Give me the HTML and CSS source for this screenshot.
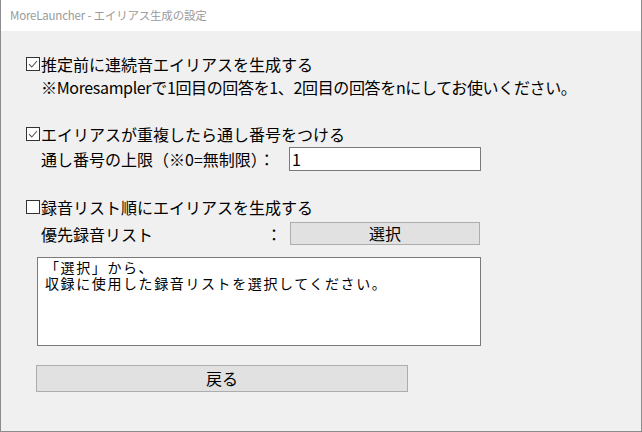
FILE: index.html
```html
<!DOCTYPE html>
<html lang="ja">
<head>
<meta charset="utf-8">
<link rel="stylesheet" href="styles.css">
</head>
<body>
<div class="window">
  <div class="titlebar">MoreLauncher - エイリアス生成の設定</div>
  <div class="content">
    <div class="row check-row r1">
      <span class="cb checked"><svg viewBox="0 0 14 14" width="14" height="14"><rect x="0.5" y="0.5" width="13" height="13" fill="#fff" stroke="#333"/><path d="M3 7.2 L5.8 10 L11 4" fill="none" stroke="#555" stroke-width="1.1"/></svg></span>
      <span>推定前に連続音エイリアスを生成する</span>
    </div>
    <div class="row indent r2">※Moresamplerで1回目の回答を1、2回目の回答をnにしてお使いください。</div>

    <div class="row check-row r3">
      <span class="cb checked"><svg viewBox="0 0 14 14" width="14" height="14"><rect x="0.5" y="0.5" width="13" height="13" fill="#fff" stroke="#333"/><path d="M3 7.2 L5.8 10 L11 4" fill="none" stroke="#555" stroke-width="1.1"/></svg></span>
      <span>エイリアスが重複したら通し番号をつける</span>
    </div>
    <div class="row indent field-row r4">
      <span class="label">通し番号の上限（※0=無制限）：</span>
      <div class="input">1</div>
    </div>

    <div class="row check-row r5">
      <span class="cb"><svg viewBox="0 0 14 14" width="14" height="14"><rect x="0.5" y="0.5" width="13" height="13" fill="#fff" stroke="#333"/></svg></span>
      <span>録音リスト順にエイリアスを生成する</span>
    </div>
    <div class="row indent button-row r6">
      <span class="label split"><span>優先録音リスト</span><span class="colon">：</span></span>
      <div class="btn select-btn">選択</div>
    </div>

    <div class="textbox"><div class="tline">「選択」から、</div><div class="tline">収録に使用した録音リストを選択してください。</div></div>

    <div class="btn back-btn">戻る</div>
  </div>
</div>
</body>
</html>
```
FILE: styles.css
```css
html, body {
  margin: 0;
  padding: 0;
}
body {
  width: 642px;
  height: 432px;
  overflow: hidden;
  font-family: "Noto Sans CJK JP", "Noto Sans", sans-serif;
  color: #000;
  background: #f0f0f0;
}
.window {
  box-sizing: border-box;
  width: 642px;
  height: 432px;
  border-left: 1px solid #8c8c8c;
  border-right: 1px solid #8c8c8c;
  border-bottom: 1px solid #8c8c8c;
  background: #f0f0f0;
  display: flex;
  flex-direction: column;
}
.titlebar {
  height: 31px;
  background: #fff;
  color: #9a9a9a;
  font-size: 11.5px;
  letter-spacing: -0.2px;
  line-height: 31px;
  padding-left: 9px;
  white-space: nowrap;
}
.content {
  padding: 23px 0 0 25px;
  font-size: 16px;
  display: flex;
  flex-direction: column;
  align-items: flex-start;
}
.row {
  height: 20px;
  line-height: 20px;
  white-space: nowrap;
  display: flex;
  align-items: center;
}
.indent {
  margin-left: 15px;
}
.cb {
  width: 14px;
  height: 14px;
  margin-right: 1px;
  display: inline-flex;
}
.cb svg {
  display: block;
}
.r2 {
  margin-top: 3px;
  letter-spacing: -0.35px;
}
.r3 { margin-top: 27px; }
.r4 {
  margin-top: 3px;
  height: 24px;
}
.r5 { margin-top: 26px; }
.r6 {
  margin-top: 5px;
  height: 23px;
}
.field-row .label {
  width: 248px;
}
.button-row .label {
  width: 249px;
}
.split {
  display: flex;
  justify-content: space-between;
  padding-right: 8px;
  box-sizing: border-box;
}
.input {
  box-sizing: border-box;
  width: 192px;
  height: 24px;
  border: 1px solid #7a7a7a;
  background: #fff;
  line-height: 22px;
  padding-left: 2px;
  font-size: 16px;
}
.btn {
  box-sizing: border-box;
  background: #e1e1e1;
  border: 1px solid #adadad;
  text-align: center;
  font-size: 16px;
}
.select-btn {
  width: 190px;
  height: 23px;
  line-height: 21px;
}
.textbox {
  box-sizing: border-box;
  margin-top: 12px;
  margin-left: 11px;
  width: 444px;
  height: 89px;
  border: 1px solid #7a7a7a;
  background: #fff;
  font-size: 14px;
  letter-spacing: 1.6px;
  padding: 1px 0 0 7px;
  white-space: nowrap;
}
.tline {
  height: 16px;
  line-height: 16px;
}
.back-btn {
  margin-top: 19px;
  margin-left: 10px;
  width: 372px;
  height: 27px;
  line-height: 25px;
}
```
